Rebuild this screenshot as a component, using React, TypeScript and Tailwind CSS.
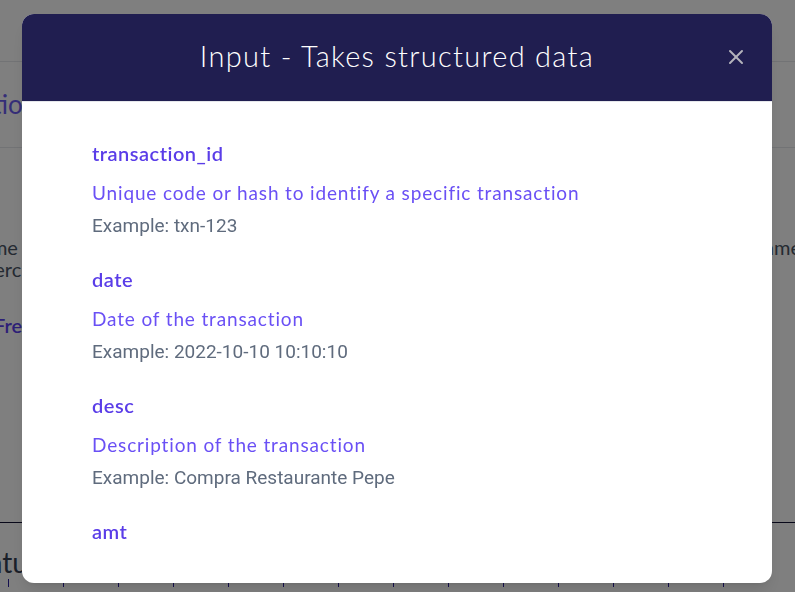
import { X } from 'lucide-react';

const fields = [
  {
    name: 'transaction_id',
    desc: 'Unique code or hash to identify a specific transaction',
    example: 'txn-123',
  },
  { name: 'date', desc: 'Date of the transaction', example: '2022-10-10 10:10:10' },
  { name: 'desc', desc: 'Description of the transaction', example: 'Compra Restaurante Pepe' },
  { name: 'amt', desc: 'Amount of the transaction', example: '-20.5' },
];

const rounded = { fontFamily: "'Lato', 'Noto Sans', sans-serif" };

function Background() {
  return (
    <div className="min-h-[592px] overflow-hidden bg-white text-gray-700" style={rounded}>
      <div className="h-[62px] border-b border-gray-200" />
      <div className="flex h-[86px] items-center border-b border-gray-200 text-[26px] text-[#6b5cf0]">
        <span className="-ml-[88px]">Integration</span>
      </div>
      <div className="flex justify-between pt-[88px] text-[20px] leading-[22px] text-gray-600">
        <div>
          <p className="-ml-[34px]">Name</p>
          <p className="-ml-[24px]">Merc</p>
          <p className="-ml-[6px] mt-[34px] font-semibold text-[#5b3ff0]">Free</p>
        </div>
        <p className="-mr-[6px]">Name</p>
      </div>
      <div className="mt-[186px] border-t border-[#111133]" />
      <div className="pt-[24px] text-[28px] leading-[30px] text-gray-700">
        <span className="-ml-[36px]">Status</span>
      </div>
      <div className="mt-[2px] flex gap-[54px] pl-[8px]">
        {[0, 1, 2, 3, 4, 5, 6, 7, 8, 9, 10, 11, 12, 13].map((i) => (
          <span key={i} className="h-[8px] w-px bg-[#2b20a0]" />
        ))}
      </div>
    </div>
  );
}

function FieldItem({ name, desc, example }: { name: string; desc: string; example: string }) {
  return (
    <div className="mb-[27px]">
      <h3 className="text-[20px] font-semibold leading-[28px] tracking-[0.5px] text-[#5a3de8]">
        {name}
      </h3>
      <p className="mt-[12px] text-[19px] leading-[28px] tracking-[0.85px] text-[#6a50f5]">{desc}</p>
      <p
        className="mt-[7px] text-[19px] leading-[24px] text-[#5f6b7d]"
        style={{ fontFamily: "'Roboto', sans-serif" }}
      >
        Example: {example}
      </p>
    </div>
  );
}

export default function App() {
  return (
    <div className="relative">
      <Background />
      <div className="fixed inset-0 bg-black/50">
        <div
          className="ml-[22px] mt-[14px] flex h-[569px] w-[750px] flex-col overflow-hidden rounded-[12px] bg-white shadow-lg"
          style={rounded}
        >
          <div className="relative flex h-[88px] shrink-0 items-center justify-center border-b border-gray-200 bg-[#201e50]">
            <h2 className="-mt-[4px] text-[29px] font-light tracking-[1.3px] text-white">
              Input - Takes structured data
            </h2>
            <button className="absolute right-[24px] top-[31px] text-[#b4b4bc]" aria-label="Close">
              <X size={24} strokeWidth={2} />
            </button>
          </div>
          <div className="mb-[31px] flex-1 overflow-hidden px-[70px] pt-[37px]">
            {fields.map((f) => (
              <FieldItem key={f.name} {...f} />
            ))}
          </div>
        </div>
      </div>
    </div>
  );
}
